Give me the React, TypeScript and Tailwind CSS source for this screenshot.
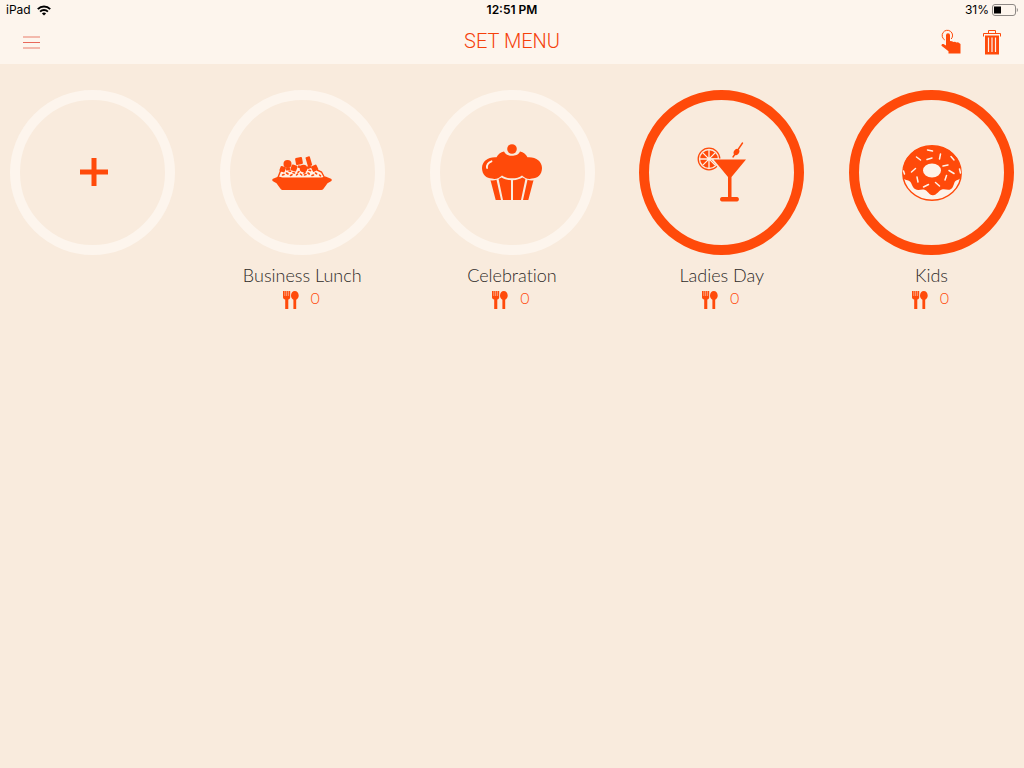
import React from "react";

interface MenuSet {
  name: string;
  count: number;
  active: boolean;
  icon: React.ReactNode;
}

const WifiIcon = () => (
  <svg viewBox="0 0 14 11" className="w-3.5 h-[11px]" fill="none" stroke="#000">
    <path d="M0.8 4.1a8.8 8.8 0 0 1 12.4 0" strokeWidth="2" />
    <path d="M3.1 6.6a5.5 5.5 0 0 1 7.8 0" strokeWidth="1.8" />
    <path d="M7 10.6L4.9 8.5a3 3 0 0 1 4.2 0z" fill="#000" stroke="none" />
  </svg>
);

const BatteryIcon = () => (
  <svg viewBox="0 0 26 12" className="w-[26px] h-3">
    <rect x="0.5" y="0.5" width="23" height="11" rx="2.5" fill="none" stroke="#8d8884" />
    <rect x="2" y="2.5" width="7" height="7" fill="#000" />
    <path d="M24.800 4v4c1.400-.6 1.400-3.400 0-4z" fill="#8d8884" />
  </svg>
);

const TapIcon = () => (
  <svg viewBox="0 0 20 26" className="w-5 h-[26px]">
    <path
      d="M3.800 11A5.200 5.200 0 1 1 10.200 10"
      fill="none"
      stroke="#ff4a0a"
      strokeWidth="1"
    />
    <path
      d="M5 6.200a2 2 0 0 1 4 0V12l2 .2 1.500.8 1.500-.3 1.500.8 1.500-.2L19.500 15v9.500H7.500v-2.300L.8 17c-.9-1 .2-2.500 1.600-2L5 16.500z"
      fill="#ff4a0a"
    />
  </svg>
);

const TrashIcon = () => (
  <svg viewBox="0 0 18 25" className="w-[18px] h-[25px]">
    <path d="M5.500 3.500v-3h7v3M0.500 6.500v-3h17v3" fill="none" stroke="#ff4a0a" />
    <path d="M2 5.500h14v19H2z" fill="#ff4a0a" />
    <path d="M5.500 7.500v14.500M9 7.500v14.500M12.500 7.500v14.500" stroke="#fdf1e8" strokeWidth="1.200" />
  </svg>
);

const PlusIcon = () => (
  <svg viewBox="0 0 28 28" className="w-7 h-7 ml-0.5 mb-0.5">
    <path d="M14 0v28M0 14h28" stroke="#ff4a0a" strokeWidth="5" />
  </svg>
);

const LunchIcon = () => (
  <svg viewBox="0 0 60 34" className="w-[60px] h-[34px]" fill="#ff4a0a">
    <path d="M7 21l2-5 5-3.500 8-1 10 0 9 1.500 8 2 3 3 1 3z" fill="#fff2e6" />
    <path d="M6 21.500L8.500 15l3-1.500M45 14l4.500 2 3 5.500" fill="none" stroke="#ff4a0a" strokeWidth="1.400" />
    <path d="M1 22.800L6.500 20.500l4 1h39l4-1 5.500 2.300c1 .4 1 2 0 2.400l-3.500 2-4 5.500c-.8 1-1.500 1.300-3 1.300h-37c-1.500 0-2.200-.3-3-1.300l-4-5.500-3.500-2c-1-.4-1-2 0-2.400z" />
    <circle cx="15.500" cy="8" r="4" />
    <circle cx="31.500" cy="12.500" r="3.800" />
    <rect x="23.500" y="1.500" width="7" height="7" rx="1" transform="rotate(-10 27 5)" />
    <rect x="34.500" y="0.500" width="4.500" height="9.500" rx="0.800" transform="rotate(-16 37 5)" />
    <rect x="8" y="10.500" width="5.500" height="5.500" rx="1" transform="rotate(20 11 13)" />
    <rect x="19" y="9" width="6" height="6" rx="1" transform="rotate(20 22 12)" />
    <rect x="39.500" y="9.500" width="6" height="6" rx="1" transform="rotate(-25 42 12)" />
    <path d="M14 13.500l4-1M26 10.500l3 .5M35 12l4-1.500" stroke="#ff4a0a" strokeWidth="2.500" />
    <path
      d="M10.500 19l1.500-.5M14.500 17l1.500 1M18.500 19.500l1.500-.8M21 16.500l1.500.5M24.500 19l1-.8M28.500 18l1.200 1M32.500 19l1.500-.5M36 17l1.300 1M40 19.500l1.500-.5M43.500 17l1.200.8M47.500 19l1 .8M17 15l1.500.3M27 15.500l-1 .8M37 14.200l1.500.4M33 16.400l-1 .8"
      stroke="#ff4a0a"
      strokeWidth="1.600"
      strokeLinecap="round"
    />
  </svg>
);

const CupcakeIcon = () => (
  <svg viewBox="0 0 60 57" className="w-[60px] h-[57px]" fill="#ff4a0a">
    <path d="M22 7.500c-3.500.7-6 2.700-7.500 5.700C6.500 12.500 0 17 0 24c0 6.500 4.500 10.500 10 10.500 3.500 1.300 7.500-.6 10-3 4.500 3.800 15.500 3.800 20 0 2.500 2.400 6.500 4.300 10 3 5.500 0 10-4 10-10.500 0-7-6.500-11.500-14.500-10.800-1.500-3-4-5-7.500-5.700-1.700 3.800-5 4.200-8 4.200s-6.300-.4-8-4.200z" />
    <circle cx="30" cy="5" r="4.800" />
    <path d="M5 24c-.4-3.200 1.300-5.600 4.500-6.700" fill="none" stroke="#fff2e6" strokeWidth="1.800" strokeLinecap="round" />
    <path d="M8.500 36.300c2.200.4 4.300.2 6-.5L19 56h-5.300z" />
    <path d="M16.600 35l3-1.500c2.500 1.500 5.500 2.500 9.400 2.700V56h-8z" />
    <path d="M43.400 35l-3-1.500c-2.500 1.500-5.500 2.500-9.400 2.700V56h8z" />
    <path d="M51.500 36.300c-2.200.4-4.300.2-6-.5L41 56h5.300z" />
  </svg>
);

const CocktailIcon = () => (
  <svg viewBox="0 0 50 62" className="w-[50px] h-[62px]" fill="#ff4a0a">
    <circle cx="12" cy="17" r="10.800" fill="none" stroke="#ff4a0a" strokeWidth="1.300" />
    <circle cx="12" cy="17" r="8.800" />
    <path
      d="M12 8v18M3 17h18M5.600 10.600l12.800 12.800M18.400 10.600L5.600 23.400"
      stroke="#fff2e6"
      strokeWidth="1.300"
    />
    <path d="M13 16.500h37L35 35.500H30z" fill="#f9ebdd" />
    <path d="M16.500 17.500h32.500L34.500 35v20h5.500c2.600 0 2.600 4.500 0 4.500H25c-2.600 0-2.600-4.500 0-4.500h6V35z" />
    <path d="M45.500 1L36 15" stroke="#ff4a0a" strokeWidth="1.400" strokeLinecap="round" />
    <ellipse cx="39.500" cy="10" rx="2.600" ry="3.300" transform="rotate(34 39.500 10)" />
  </svg>
);

const DonutIcon = () => (
  <svg viewBox="0 0 60 56" className="w-[60px] h-14">
    <ellipse cx="30" cy="28" rx="29.200" ry="27.200" fill="#fdf3ea" stroke="#ff4a0a" strokeWidth="1.400" />
    <path
      d="M1 33C-1 12 13 1 30 1s31 11 29 32c-2 2-4 1.500-5.500 3-2 2-1.500 6-4.500 8-3 2-6-.5-9 .5-3.500 1-5 5.500-9 5.800-4 .2-5-4.500-8.500-5.500-3-.8-6.500 1.200-9.500-.8-3-2-3-5.500-5-7.500-2-2-5-1-7-3.500z"
      fill="#ff4a0a"
    />
    <ellipse cx="30" cy="25.500" rx="9" ry="7" fill="#fdf3ea" />
    <path
      d="M25.500 5l5 1M14.500 12l4 3M38.500 9l-1 5M49 11.500l3 3.500M25 14.500l5-1.500M41 21l5-1M9.500 27l4-3.500M47 25.500l5 3M15 32l1 5M43 35l1.500-4.500M21.500 42l5-2.500M33.500 37.500l4 3.500M1.500 26l1 3M57.500 24l1 4"
      fill="none"
      stroke="#fdf3ea"
      strokeWidth="1.500"
      strokeLinecap="round"
    />
  </svg>
);

const UtensilsIcon = () => (
  <svg viewBox="0 0 16 18" className="w-4 h-[18px]" fill="#ff4a0a">
    <path d="M0 0h7.200v6.300c0 1.300-.7 1.900-1.900 2.200V18H2.200V8.500C.8 8.200 0 7.600 0 6.300z" />
    <path d="M1.800 0v5M3.600 0v5M5.400 0v5" stroke="#f9ebdd" strokeWidth="0.500" />
    <path d="M11.800 0c2.200 0 3.900 2.100 3.900 4.500 0 2-1 3.600-2.500 4.200V18h-2.800V8.700C8.900 8.100 8 6.500 8 4.500 8 2.100 9.600 0 11.800 0z" />
  </svg>
);

const menus: MenuSet[] = [
  { name: "Business Lunch", count: 0, active: false, icon: <LunchIcon /> },
  { name: "Celebration", count: 0, active: false, icon: <CupcakeIcon /> },
  { name: "Ladies Day", count: 0, active: true, icon: <CocktailIcon /> },
  { name: "Kids", count: 0, active: true, icon: <DonutIcon /> },
];

const MenuItem = ({ name, count, active, icon }: MenuSet) => {
  return (
    <div className="flex flex-col items-center w-[165px]">
      <button
        aria-label={name}
        className={`flex items-center justify-center w-[165px] h-[165px] rounded-full border-10 cursor-pointer ${
          active ? "border-[#ff4a0a]" : "border-[#fdf5ed]"
        }`}
      >
        {icon}
      </button>
      <p className="mt-2 text-lg leading-6 font-light text-[#2e2a28] [font-variant-ligatures:none]">
        {name}
      </p>
      <div className="flex items-center gap-3 mt-[3px] pr-0.5 text-[#ff4a0a]">
        <UtensilsIcon />
        <span className="pb-1 text-base leading-4 font-light">{count}</span>
      </div>
    </div>
  );
};

const App = () => {
  return (
    <div className="min-h-screen bg-[#f9ebdd] font-['Lato',sans-serif]">
      <header className="bg-[#fdf5ed]">
        <div className="grid grid-cols-3 items-center h-5 px-1.5 font-['Inter',sans-serif] text-xs text-black">
          <div className="flex items-center gap-1.5">
            <span>iPad</span>
            <WifiIcon />
          </div>
          <p className="text-center font-semibold">12:51 PM</p>
          <div className="flex items-center justify-end gap-[3px]">
            <span>31%</span>
            <BatteryIcon />
          </div>
        </div>

        <div className="grid grid-cols-3 items-center h-11 px-[23px]">
          <button aria-label="Menu" className="w-[17px] cursor-pointer">
            <svg viewBox="0 0 17 13" className="w-[17px] h-[13px]">
              <path d="M0 1h17M0 12h17" stroke="#f0a596" strokeWidth="1.500" />
              <path d="M0 6.500h17" stroke="#e8685a" />
            </svg>
          </button>
          <h1 className="pb-0.5 text-center font-['Roboto',sans-serif] text-xl leading-6 font-light text-[#f5400a]">
            SET MENU
          </h1>
          <div className="flex items-center justify-end gap-[22px]">
            <button aria-label="Select" className="cursor-pointer">
              <TapIcon />
            </button>
            <button aria-label="Delete" className="cursor-pointer">
              <TrashIcon />
            </button>
          </div>
        </div>
      </header>

      <main className="flex justify-between px-2.5 pt-[26px]">
        <button
          aria-label="Add set menu"
          className="flex items-center justify-center w-[165px] h-[165px] rounded-full border-10 border-[#fdf5ed] cursor-pointer"
        >
          <PlusIcon />
        </button>
        {menus.map((menu) => (
          <MenuItem key={menu.name} {...menu} />
        ))}
      </main>
    </div>
  );
};

export default App;
